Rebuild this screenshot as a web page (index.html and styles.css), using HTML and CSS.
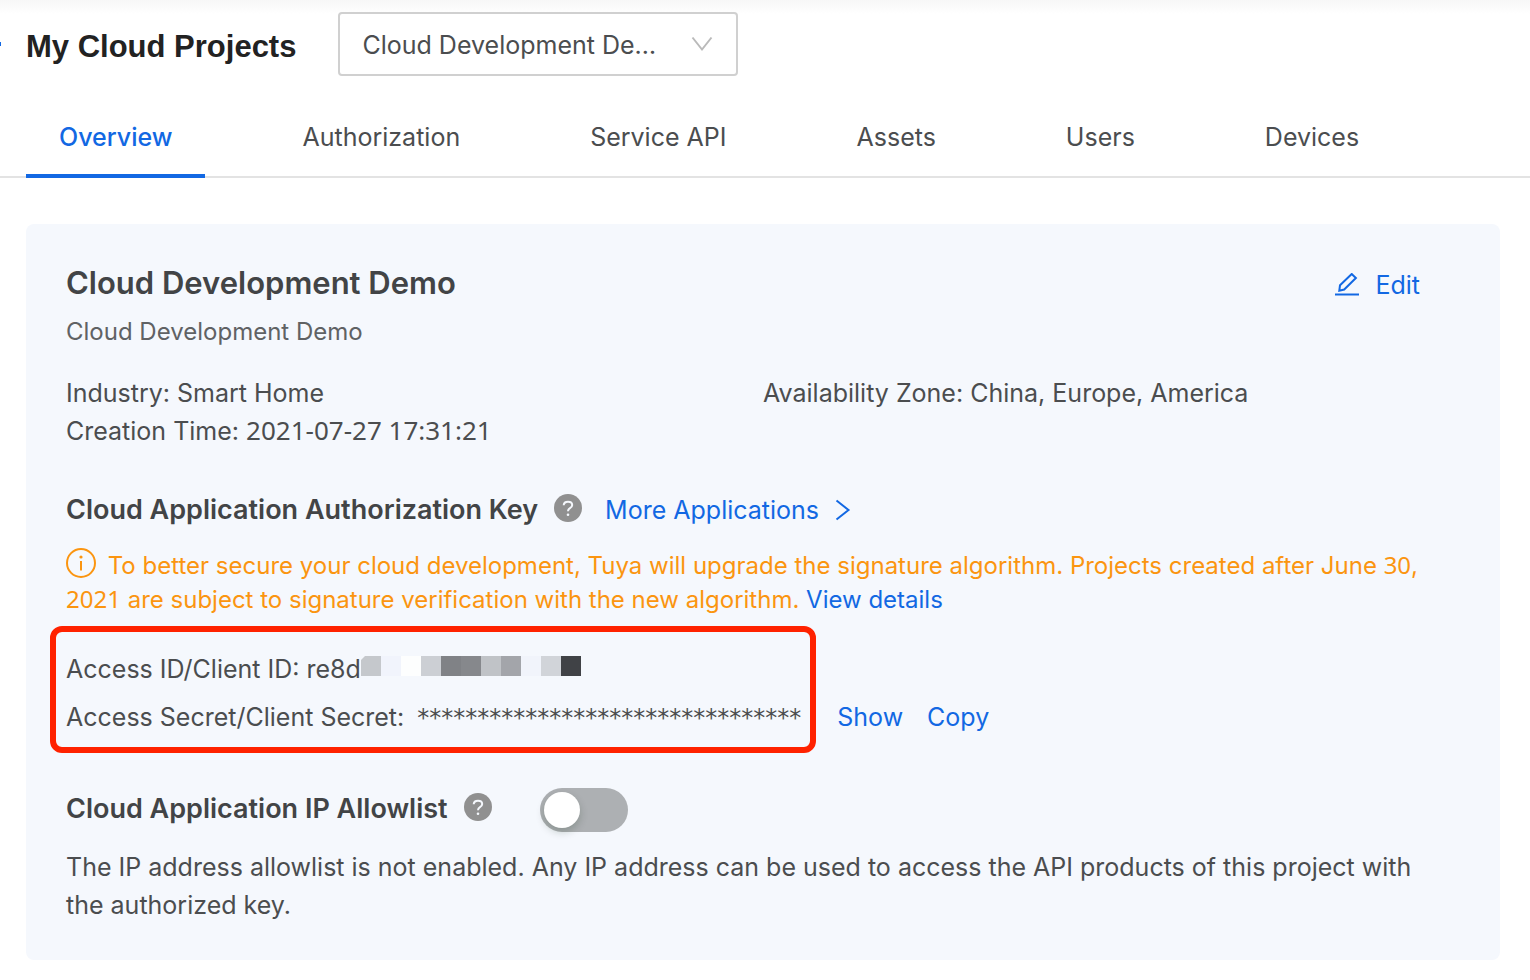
FILE: index.html
```html
<!DOCTYPE html>
<html lang="en">
<head>
<meta charset="utf-8">
<meta name="viewport" content="width=device-width, initial-scale=1">
<title>My Cloud Projects</title>
<link rel="stylesheet" href="styles.css">
</head>
<body>
<header class="page-header">
  <span class="back-mark" aria-hidden="true"></span>
  <h1 class="page-title">My Cloud Projects</h1>
  <div class="project-picker">
    <select class="project-select" aria-label="Project">
      <option>Cloud Development Demo</option>
    </select>
    <svg class="picker-arrow" viewBox="0 0 22 16" aria-hidden="true"><path d="M1.5 1.5 11 13.5 20.500 1.500" /></svg>
  </div>
</header>

<nav class="tabs" aria-label="Project sections">
  <a class="tab tab-active" href="#overview" aria-current="page">Overview</a>
  <a class="tab" href="#authorization">Authorization</a>
  <a class="tab" href="#service-api">Service API</a>
  <a class="tab" href="#assets">Assets</a>
  <a class="tab" href="#users">Users</a>
  <a class="tab" href="#devices">Devices</a>
</nav>

<main class="panel">
  <div class="panel-head">
    <h2 class="project-name">Cloud Development Demo</h2>
    <button class="edit-button" type="button">
      <svg class="edit-icon" viewBox="0 0 24 24" aria-hidden="true"><path d="M4.300 17.700 5 12.300 16.700 1 20.900 5 9.200 16.500Z" /><path d="M0 21.500H24" /></svg>
      Edit
    </button>
  </div>
  <p class="description">Cloud Development Demo</p>

  <div class="facts">
    <p>Industry: Smart Home</p>
    <p>Availability Zone: China, Europe, America</p>
    <p>Creation Time: <span class="figures date">2021-07-27 17:31:21</span></p>
  </div>

  <div class="section-head section-key">
    <h3 class="section-title">Cloud Application Authorization Key</h3>
    <button class="help" type="button" aria-label="About the authorization key">
      <svg viewBox="0 0 28 28" aria-hidden="true"><circle cx="14" cy="14" r="14" /><path d="M9.700 11.200Q9.900 7.700 14 7.700Q18.200 7.700 18.200 11.100Q18.200 13 16 14.200Q14 15.300 14 17.300" /><circle class="dot" cx="14" cy="20.700" r="1.300" /></svg>
    </button>
    <a class="more-link" href="#applications">More Applications
      <svg class="more-arrow" viewBox="0 0 16 22" aria-hidden="true"><path d="M1.500 1.500 13.500 11 1.500 20.500" /></svg>
    </a>
  </div>

  <p class="notice">
    <svg class="notice-icon" viewBox="0 0 30 30" aria-hidden="true"><circle cx="15" cy="15" r="14" /><path d="M15 13V22.500" /><circle class="dot" cx="15" cy="9" r="1.600" /></svg>
    To better secure your cloud development, Tuya will upgrade the signature algorithm. Projects created after June <span class="figures">30</span>, <span class="figures">2021</span> are subject to signature verification with the new algorithm. <a class="link" href="#details">View details</a>
  </p>

  <div class="credentials">
    <div class="credential-box">
      <p class="credential">Access ID/Client ID: re8d<svg class="mosaic" viewBox="0 0 220 20" role="img" aria-label="Hidden"><path d="M4 0H20V20H0V4Z" fill="#c5c8cc"/><path d="M20 0h20v20h-20z" fill="#f1f4fc"/><path d="M40 0h20v20h-20z" fill="#fdfefe"/><path d="M60 0h20v20h-20z" fill="#cccfd4"/><path d="M80 0h20v20h-20z" fill="#808286"/><path d="M100 0h20v20h-20z" fill="#86888c"/><path d="M120 0h20v20h-20z" fill="#c0c3c7"/><path d="M140 0h20v20h-20z" fill="#a3a5aa"/><path d="M160 0h20v20h-20z" fill="#f1f4fb"/><path d="M180 0h20v20h-20z" fill="#d1d4d9"/><path d="M200 0h20v20h-20z" fill="#404246"/></svg></p>
      <p class="credential">Access Secret/Client Secret: <span class="secret">********************************</span></p>
    </div>
    <div class="credential-actions">
      <button class="text-button" type="button">Show</button>
      <button class="text-button" type="button">Copy</button>
    </div>
  </div>

  <div class="section-head section-allow">
    <h3 class="section-title"><label for="allowlist">Cloud Application IP Allowlist</label></h3>
    <button class="help" type="button" aria-label="About the IP allowlist">
      <svg viewBox="0 0 28 28" aria-hidden="true"><circle cx="14" cy="14" r="14" /><path d="M9.700 11.200Q9.900 7.700 14 7.700Q18.200 7.700 18.200 11.100Q18.200 13 16 14.200Q14 15.300 14 17.300" /><circle class="dot" cx="14" cy="20.700" r="1.300" /></svg>
    </button>
    <input class="switch" type="checkbox" role="switch" id="allowlist">
  </div>
  <p class="allow-text">The IP address allowlist is not enabled. Any IP address can be used to access the API products of this project with the authorized key.</p>
</main>
</body>
</html>
```
FILE: styles.css
```css
* {
  box-sizing: border-box;
}

body {
  margin: 0;
  background: linear-gradient(#f7f7f7, #ffffff 14px) no-repeat #ffffff;
  color: #4b4d4f;
  font-family: Inter, "Liberation Sans", sans-serif;
  font-size: 25px;
  line-height: 38px;
}

h1,
h2,
h3,
p {
  margin: 0;
}

button {
  padding: 0;
  border: 0;
  background: none;
  color: #1268e3;
  font: inherit;
  cursor: pointer;
}

a {
  color: #1268e3;
  text-decoration: none;
}

svg {
  fill: none;
  stroke: currentColor;
  stroke-width: 2;
}

.page-header {
  position: relative;
  display: flex;
  align-items: center;
  gap: 42px;
  padding: 12px 26px 0;
}

.back-mark {
  position: absolute;
  left: 0;
  top: 42px;
  width: 1px;
  height: 4px;
  background: #1268e3;
}

.page-title {
  padding-top: 6px;
  color: #222222;
  font-family: "Liberation Sans", Arial, sans-serif;
  font-size: 31px;
  font-weight: 700;
}

.project-picker {
  position: relative;
  width: 400px;
}

.project-select {
  display: block;
  width: 100%;
  height: 64px;
  padding: 2px 72px 0 22px;
  border: 2px solid #d0d0d0;
  border-radius: 4px;
  appearance: none;
  background: #ffffff;
  color: #4b4d4f;
  font: inherit;
  text-overflow: ellipsis;
}

.picker-arrow {
  position: absolute;
  top: 24px;
  right: 25px;
  width: 22px;
  height: 16px;
  color: #bababa;
  pointer-events: none;
}

.tabs {
  display: flex;
  gap: 64px;
  padding: 0 26px;
  margin-top: 24px;
  box-shadow: inset 0 -2px #e3e3e3;
}

.tab {
  padding: 18px 33px;
  border-bottom: 4px solid transparent;
  color: #4b4d4f;
}

.tab-active {
  border-color: #1268e3;
  color: #1268e3;
  font-weight: 500;
}

.panel {
  margin: 46px 30px 20px 26px;
  padding: 40px 40px 36px;
  border-radius: 8px;
  background: #f5f8fd;
}

.panel-head {
  display: flex;
  justify-content: space-between;
  padding-right: 40px;
}

.project-name {
  color: #424446;
  font-size: 31px;
  font-weight: 600;
}

.edit-button {
  display: flex;
  align-items: center;
  gap: 16px;
  padding-top: 2px;
}

.edit-icon {
  width: 24px;
  height: 24px;
}

.description {
  margin-top: 9px;
  color: #606264;
  font-size: 24px;
}

.facts {
  display: grid;
  grid-template-columns: 1fr 1fr;
  margin-top: 23px;
}

.figures {
  font-family: "Noto Sans", sans-serif;
  line-height: 1;
}

.date {
  font-size: 26px;
}

.section-head {
  display: flex;
  align-items: center;
}

.section-key {
  margin-top: 41px;
}

.section-title {
  color: #424446;
  font-size: 27px;
  font-weight: 600;
}

.help {
  width: 28px;
  height: 28px;
  margin: 0 0 4px 16px;
  color: #909090;
}

.help svg {
  display: block;
  fill: currentColor;
  stroke: none;
}

.help path {
  fill: none;
  stroke: #f5f8fd;
  stroke-width: 2;
}

.help .dot {
  fill: #f5f8fd;
}

.more-link {
  display: flex;
  align-items: center;
  gap: 16px;
  margin-left: 23px;
}

.more-arrow {
  width: 16px;
  height: 22px;
}

.notice {
  margin-top: 19px;
  color: #fb9510;
  font-size: 24px;
  line-height: 34px;
}

.notice-icon {
  width: 30px;
  height: 30px;
  margin-right: 5px;
  vertical-align: -4px;
}

.notice-icon .dot {
  fill: currentColor;
  stroke: none;
}

.credentials {
  display: flex;
  align-items: flex-end;
  gap: 21px;
  margin: 9px 0 0 -16px;
}

.credential-box {
  padding: 13px 9px 6px 10px;
  border: 6px solid #ff2200;
  border-radius: 12px;
}

.credential {
  line-height: 48px;
}

.mosaic {
  width: 220px;
  height: 20px;
  stroke: none;
  vertical-align: 2px;
}

.secret {
  margin-left: 6px;
  font-family: "DejaVu Sans", sans-serif;
  font-size: 24px;
  line-height: 1;
}

.credential-actions {
  display: flex;
  gap: 24px;
  padding-bottom: 17px;
}

.section-allow {
  margin-top: 33px;
}

.switch {
  width: 88px;
  height: 44px;
  margin: 2px 0 0 48px;
  border-radius: 22px;
  appearance: none;
  background: #adb0b3;
  cursor: pointer;
}

.switch::before {
  display: block;
  width: 36px;
  height: 36px;
  margin: 4px;
  border-radius: 50%;
  background: #ffffff;
  box-shadow: 0 4px 8px rgba(0, 35, 11, 0.2);
  content: "";
}

.switch:checked {
  background: #1268e3;
}

.switch:checked::before {
  margin-left: 48px;
}

.allow-text {
  margin-top: 16px;
  padding-right: 16px;
}
```
